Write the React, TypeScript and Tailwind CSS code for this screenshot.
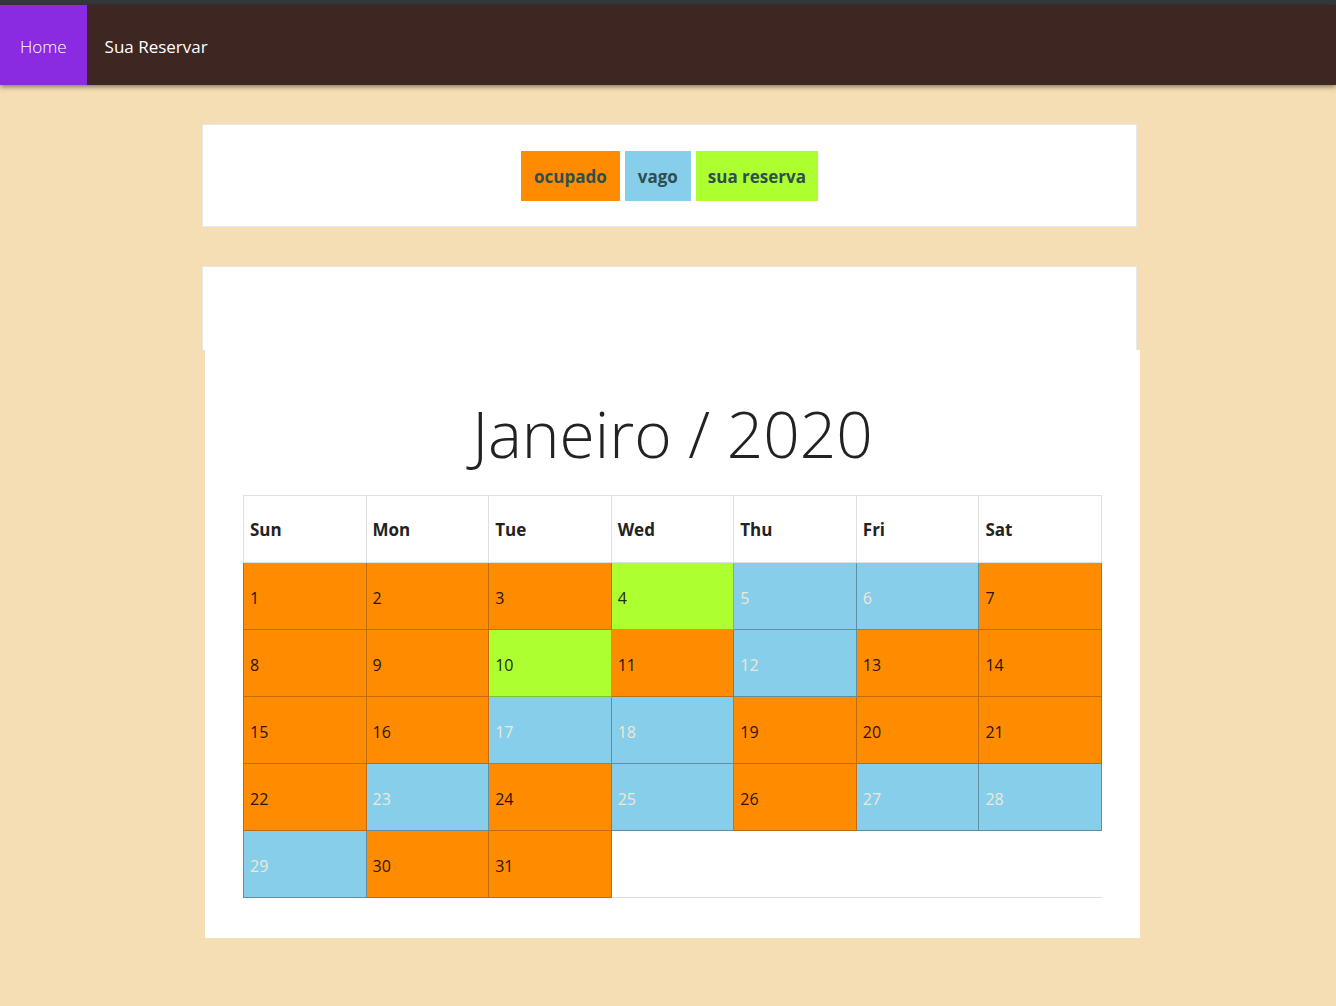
import React from "react";

type Status = "o" | "v" | "r";

const days: Status[] = [
    "o", "o", "o", "r", "v", "v", "o",
    "o", "o", "r", "o", "v", "o", "o",
    "o", "o", "v", "v", "o", "o", "o",
    "o", "v", "o", "v", "o", "v", "v",
    "v", "o", "o",
];

const cellStyle: Record<Status, string> = {
    o: "bg-[#ff8c00] border-[#c06c0a] text-[#2a1300]",
    v: "bg-[#87ceeb] border-[#5f8fa6] text-[#eee8d6]",
    r: "bg-[#adff2f] border-[#86c02a] text-[#1f2a10]",
};

const weekDays = ["Sun", "Mon", "Tue", "Wed", "Thu", "Fri", "Sat"];

export default function App() {
    const rows: (number | null)[][] = [];
    for (let i = 0; i < 35; i += 7) {
        rows.push(Array.from({ length: 7 }, (_, k) => (i + k < 31 ? i + k + 1 : null)));
    }

    return (
        <div className="min-h-[1006px] bg-[#f5deb3] font-['Open_Sans',sans-serif]">
            <div className="h-[5px] bg-[#35373a]" />
            <nav className="flex h-[80px] bg-[#3e2723] shadow-[0_2px_5px_rgba(0,0,0,0.45)]">
                <a className="flex items-center bg-[#8a2be2] px-[20px] pt-[3px] text-[17px] font-light text-white">Home</a>
                <a className="flex items-center px-[18px] pt-[3px] text-[17px] text-white">Sua Reservar</a>
            </nav>

            <div className="ml-[202px] mt-[39px] w-[935px]">
                <div className="flex h-[103px] items-center justify-center gap-[5px] border border-[#e8e8e8] bg-white">
                    <span className="flex h-[50px] items-center bg-[#ff8c00] px-[13px] pt-[3px] text-[17px] font-bold text-[#2f4f4f]">ocupado</span>
                    <span className="flex h-[50px] items-center bg-[#87ceeb] px-[13px] pt-[3px] text-[17px] font-bold text-[#2f4f4f]">vago</span>
                    <span className="flex h-[50px] items-center bg-[#adff2f] px-[12px] pt-[3px] text-[17px] font-bold text-[#2f4f4f]">sua reserva</span>
                </div>

                <div className="mt-[39px] h-[84px] border-x border-t border-[#e8e8e8] bg-white" />
                <div className="ml-[3px] w-[935px] bg-white px-[38px] pb-[40px] pt-[44px]">
                    <h1 className="mb-[21px] text-center text-[64px] font-light leading-[80px] text-[#222]">Janeiro / 2020</h1>
                    <table className="w-[859px] table-fixed border-collapse">
                        <thead>
                            <tr>
                                {weekDays.map((d) => (
                                    <th key={d} className="h-[67px] border border-[#e0e0e0] px-[6px] pt-[2px] text-left text-[17px] font-bold text-[#222]">
                                        {d}
                                    </th>
                                ))}
                            </tr>
                        </thead>
                        <tbody className="border-b border-[#ddd]">
                            {rows.map((row, ri) => (
                                <tr key={ri}>
                                    {row.map((n, ci) =>
                                        n ? (
                                            <td key={ci} className={`h-[67px] border px-[6px] pt-[3px] text-[16px] ${cellStyle[days[n - 1]]}`}>
                                                {n}
                                            </td>
                                        ) : (
                                            <td key={ci} className="h-[67px]" />
                                        )
                                    )}
                                </tr>
                            ))}
                        </tbody>
                    </table>
                </div>
            </div>
        </div>
    );
}
